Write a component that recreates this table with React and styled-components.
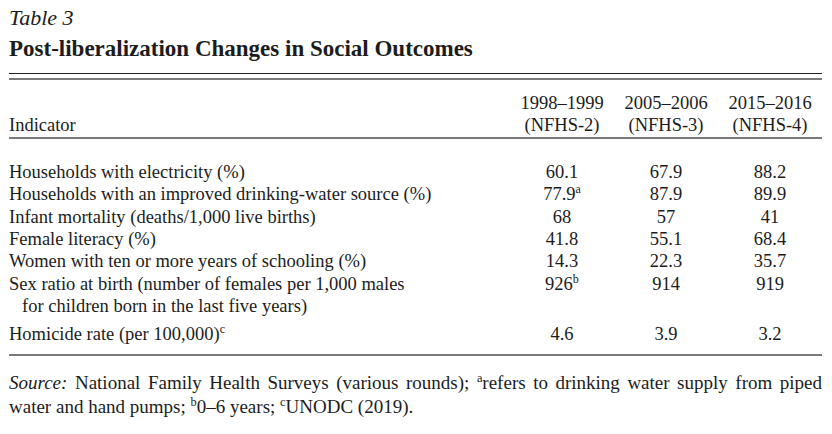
import React from 'react';
import styled, { createGlobalStyle } from 'styled-components';

const GlobalStyle = createGlobalStyle`
    body {
        margin: 0;
        background: #fff;
        color: #1c1c1c;
        font-family: "Liberation Serif", "DejaVu Serif", serif;
    }
`;

const Page = styled.div`
    width: 813px;
    padding: 6px 0 0 9px;
`;

const Caption = styled.div`
    font-style: italic;
    font-size: 22px;
    line-height: 24px;
`;

const Title = styled.h1`
    margin: 6px 0 0;
    font-size: 23px;
    line-height: 26px;
    font-weight: 700;
`;

const DoubleRule = styled.div`
    margin-top: 11px;
    border-top: 1px solid #222;
    height: 4px;
    border-bottom: 2px solid #7a7a7a;
`;

const Grid = styled.div`
    display: grid;
    grid-template-columns: 1fr 104px 104px 104px;
    font-size: 18.5px;
    line-height: 22.4px;
`;

const HeadCell = styled.div`
    padding: 12px 0 0;
    display: flex;
    flex-direction: column;
    justify-content: flex-end;
    white-space: nowrap;
    text-align: ${p => (p.$left ? 'left' : 'center')};
    border-bottom: 2px solid #7a7a7a;
`;

const Cell = styled.div`
    text-align: ${p => (p.$left ? 'left' : 'center')};
    padding-top: ${p => (p.$first ? '22px' : p.$gap ? '5px' : '0')};
`;

const Wrapped = styled.span`
    display: block;
    padding-left: 13px;
`;

const Sup = styled.sup`
    font-size: 0.65em;
    line-height: 0;
    vertical-align: 0.55em;
`;

const BottomRule = styled.div`
    margin-top: 9px;
    border-top: 2px solid #7a7a7a;
`;

const Note = styled.p`
    margin: 15px 0 0;
    font-size: 19px;
    line-height: 24px;
    text-align: justify;
    text-align-last: left;
`;

const rows = [
    { label: 'Households with electricity (%)', v: ['60.1', '67.9', '88.2'] },
    { label: 'Households with an improved drinking-water source (%)', v: [['77.9', 'a'], '87.9', '89.9'] },
    { label: 'Infant mortality (deaths/1,000 live births)', v: ['68', '57', '41'] },
    { label: 'Female literacy (%)', v: ['41.8', '55.1', '68.4'] },
    { label: 'Women with ten or more years of schooling (%)', v: ['14.3', '22.3', '35.7'] },
    {
        label: 'Sex ratio at birth (number of females per 1,000 males',
        wrap: 'for children born in the last five years)',
        v: [['926', 'b'], '914', '919'],
    },
    { label: 'Homicide rate (per 100,000)', sup: 'c', v: ['4.6', '3.9', '3.2'], gap: true },
];

const Value = ({ v }) =>
    Array.isArray(v) ? (
        <>
            {v[0]}
            <Sup>{v[1]}</Sup>
        </>
    ) : (
        v
    );

const App = () => (
    <Page>
        <GlobalStyle />
        <Caption>Table 3</Caption>
        <Title>Post-liberalization Changes in Social Outcomes</Title>
        <DoubleRule />
        <Grid>
            <HeadCell $left>Indicator</HeadCell>
            <HeadCell>
                <span>1998–1999</span>
                <span>(NFHS-2)</span>
            </HeadCell>
            <HeadCell>
                <span>2005–2006</span>
                <span>(NFHS-3)</span>
            </HeadCell>
            <HeadCell>
                <span>2015–2016</span>
                <span>(NFHS-4)</span>
            </HeadCell>
            {rows.map((r, i) => (
                <React.Fragment key={i}>
                    <Cell $left $first={i === 0} $gap={r.gap}>
                        {r.label}
                        {r.sup && <Sup>{r.sup}</Sup>}
                        {r.wrap && <Wrapped>{r.wrap}</Wrapped>}
                    </Cell>
                    {r.v.map((v, j) => (
                        <Cell key={j} $first={i === 0} $gap={r.gap}>
                            <Value v={v} />
                        </Cell>
                    ))}
                </React.Fragment>
            ))}
        </Grid>
        <BottomRule />
        <Note>
            <i>Source:</i> National Family Health Surveys (various rounds); <Sup>a</Sup>refers to drinking
            water supply from piped water and hand pumps; <Sup>b</Sup>0–6 years; <Sup>c</Sup>UNODC (2019).
        </Note>
    </Page>
);

export default App;
